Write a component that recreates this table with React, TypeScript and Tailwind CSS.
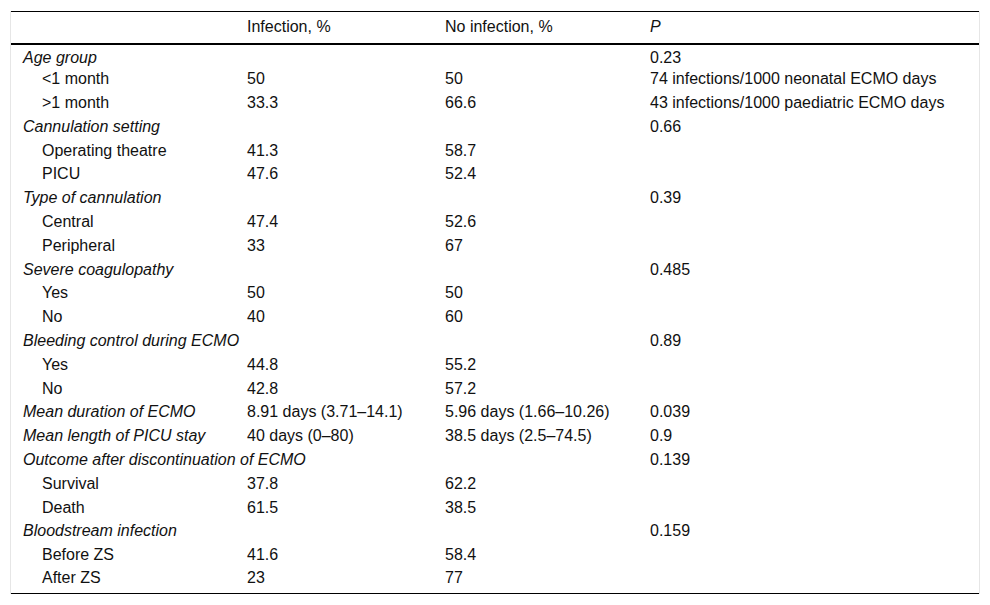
type Row = {
  label: string;
  kind: "group" | "sub" | "single";
  inf?: string;
  noInf?: string;
  p?: string;
};

const rows: Row[] = [
  { label: "Age group", kind: "group", p: "0.23" },
  { label: "<1 month", kind: "sub", inf: "50", noInf: "50", p: "74 infections/1000 neonatal ECMO days" },
  { label: ">1 month", kind: "sub", inf: "33.3", noInf: "66.6", p: "43 infections/1000 paediatric ECMO days" },
  { label: "Cannulation setting", kind: "group", p: "0.66" },
  { label: "Operating theatre", kind: "sub", inf: "41.3", noInf: "58.7" },
  { label: "PICU", kind: "sub", inf: "47.6", noInf: "52.4" },
  { label: "Type of cannulation", kind: "group", p: "0.39" },
  { label: "Central", kind: "sub", inf: "47.4", noInf: "52.6" },
  { label: "Peripheral", kind: "sub", inf: "33", noInf: "67" },
  { label: "Severe coagulopathy", kind: "group", p: "0.485" },
  { label: "Yes", kind: "sub", inf: "50", noInf: "50" },
  { label: "No", kind: "sub", inf: "40", noInf: "60" },
  { label: "Bleeding control during ECMO", kind: "group", p: "0.89" },
  { label: "Yes", kind: "sub", inf: "44.8", noInf: "55.2" },
  { label: "No", kind: "sub", inf: "42.8", noInf: "57.2" },
  { label: "Mean duration of ECMO", kind: "single", inf: "8.91 days (3.71–14.1)", noInf: "5.96 days (1.66–10.26)", p: "0.039" },
  { label: "Mean length of PICU stay", kind: "single", inf: "40 days (0–80)", noInf: "38.5 days (2.5–74.5)", p: "0.9" },
  { label: "Outcome after discontinuation of ECMO", kind: "group", p: "0.139" },
  { label: "Survival", kind: "sub", inf: "37.8", noInf: "62.2" },
  { label: "Death", kind: "sub", inf: "61.5", noInf: "38.5" },
  { label: "Bloodstream infection", kind: "group", p: "0.159" },
  { label: "Before ZS", kind: "sub", inf: "41.6", noInf: "58.4" },
  { label: "After ZS", kind: "sub", inf: "23", noInf: "77" },
];

export default function App() {
  return (
    <div
      className="min-h-screen bg-white pt-[11px] px-[10px] text-[16px] leading-[18px] text-[#111]"
      style={{ fontFamily: '"Liberation Sans", Arial, sans-serif' }}
    >
      <div className="w-[970px] border-x border-[#e6e6e6]">
        <table className="w-full table-fixed border-collapse">
          <colgroup>
            <col className="w-[224px]" />
            <col className="w-[198px]" />
            <col className="w-[205px]" />
            <col />
          </colgroup>
          <thead>
            <tr className="h-[32px] border-t border-black border-b-2">
              <th className="pl-3 text-left font-normal"></th>
              <th className="pl-3 text-left font-normal">Infection, %</th>
              <th className="pl-3 text-left font-normal">No infection, %</th>
              <th className="pl-3 text-left font-normal italic">P</th>
            </tr>
          </thead>
          <tbody className="border-b border-black">
            {rows.map((r, i) => {
              const first = i === 0;
              const last = i === rows.length - 1;
              const pad = first ? "pt-[4px]" : last ? "pb-[4px]" : "";
              return (
                <tr key={i} className={last ? "h-[26px]" : "h-[23.8px]"}>
                  <td
                    className={
                      (r.kind === "sub"
                        ? "pl-[31px] whitespace-nowrap "
                        : "pl-3 italic whitespace-nowrap ") + pad
                    }
                  >
                    {r.label}
                  </td>
                  <td className={"pl-3 whitespace-nowrap " + pad}>{r.inf}</td>
                  <td className={"pl-3 whitespace-nowrap " + pad}>{r.noInf}</td>
                  <td className={"pl-3 whitespace-nowrap " + pad}>{r.p}</td>
                </tr>
              );
            })}
          </tbody>
        </table>
      </div>
    </div>
  );
}
